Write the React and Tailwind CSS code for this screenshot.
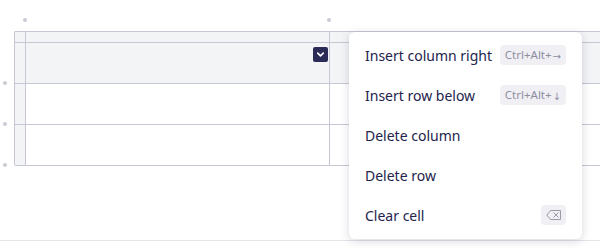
import { ChevronDown } from 'lucide-react'

const items = [
  { label: 'Insert column right', kbd: 'Ctrl+Alt+', arrow: '→' },
  { label: 'Insert row below', kbd: 'Ctrl+Alt+', arrow: '↓' },
  { label: 'Delete column' },
  { label: 'Delete row' },
  { label: 'Clear cell', erase: true },
]

function Dot({ className }) {
  return <div className={`absolute w-[4px] h-[4px] rounded-full bg-[#cbcbd5] ${className}`} />
}

export default function App() {
  return (
    <div
      className="relative w-[600px] h-[248px] bg-white overflow-hidden"
      style={{ fontFamily: '"Noto Sans", "Open Sans", sans-serif' }}
    >
      <div className="h-[241px] border-b border-[#e4e4ea] pt-[31px] pl-[14px]">
        {/* table */}
        <div className="w-[620px] grid grid-cols-[11px_304px_1fr] grid-rows-[11px_41px_41px_41px] border-l border-t border-[#c6c6d4] rounded-tl-[2px] rounded-bl-[2px]">
          <div className="bg-[#f3f4f6] border-r border-b border-[#c6c6d4]" />
          <div className="bg-[#f3f4f6] border-r border-b border-[#c6c6d4]" />
          <div className="bg-[#f3f4f6] border-b border-[#c6c6d4]" />

          <div className="bg-[#f3f4f6] border-r border-b border-[#c6c6d4]" />
          <div className="bg-[#f3f4f6] border-r border-b border-[#c6c6d4] flex justify-end items-start pt-[4px] pr-[1px]">
            <button className="w-[15px] h-[15px] rounded-[2px] bg-[#2b2b58] flex items-center justify-center">
              <ChevronDown className="w-[11px] h-[11px] text-white" strokeWidth={3.5} />
            </button>
          </div>
          <div className="bg-[#f3f4f6] border-b border-[#c6c6d4]" />

          <div className="bg-[#f3f4f6] border-r border-b border-[#c6c6d4]" />
          <div className="border-r border-b border-[#c6c6d4]" />
          <div className="border-b border-[#c6c6d4]" />

          <div className="bg-[#f3f4f6] border-r border-b border-[#c6c6d4]" />
          <div className="border-r border-b border-[#c6c6d4]" />
          <div className="border-b border-[#c6c6d4]" />
        </div>
      </div>

      {/* handles */}
      <Dot className="left-[23px] top-[18px]" />
      <Dot className="left-[327px] top-[18px]" />
      <Dot className="left-[3px] top-[81px]" />
      <Dot className="left-[3px] top-[122px]" />
      <Dot className="left-[3px] top-[163px]" />

      {/* context menu */}
      <div className="absolute left-[349px] top-[32px] w-[233px] h-[207px] bg-white rounded-md shadow-[0_2px_10px_rgba(40,40,80,0.18)] pt-[3px]">
        {items.map((item) => (
          <div key={item.label} className="h-[40px] flex items-center justify-between pl-[16px] pr-[16px]">
            <span className="text-[14px] text-[#23234d]">{item.label}</span>
            {item.kbd && (
              <span className="h-[20px] px-[5px] rounded-[4px] bg-[#f0f0f4] text-[11.5px] text-[#8d8da2] flex items-center">
                {item.kbd}
                <span className="text-[10px] ml-[1px] mt-[3px]" style={{ fontFamily: '"DejaVu Sans", sans-serif' }}>{item.arrow}</span>
              </span>
            )}
            {item.erase && (
              <span className="w-[25px] h-[20px] rounded-[4px] bg-[#f0f0f4] flex items-center justify-center">
                <svg width="15" height="10" viewBox="0 0 15 10" fill="none" stroke="#9a9aab" strokeWidth="1">
                  <path d="M4.5 0.5h10v9h-10L0.8 5z" />
                  <path d="M7.5 2.5l5 5M12.5 2.5l-5 5" />
                </svg>
              </span>
            )}
          </div>
        ))}
      </div>
    </div>
  )
}
